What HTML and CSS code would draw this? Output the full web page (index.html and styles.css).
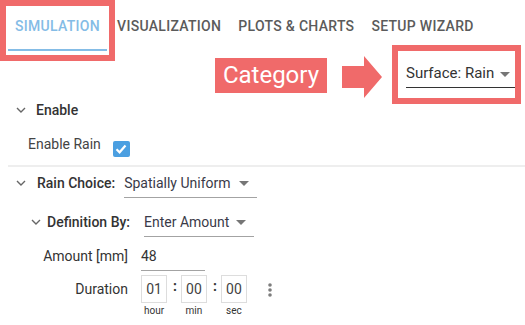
FILE: index.html
```html
<!DOCTYPE html>
<html lang="en">
<head>
<meta charset="utf-8">
<title>Simulation – Rain</title>
<link rel="stylesheet" href="styles.css">
</head>
<body>
<div class="page">
  <nav class="tabs">
    <span class="tab active">SIMULATION</span>
    <span class="tab">VISUALIZATION</span>
    <span class="tab">PLOTS &amp; CHARTS</span>
    <span class="tab">SETUP WIZARD</span>
    <span class="hl"></span>
  </nav>

  <div class="cat-row">
    <span class="cat-label">Category</span>
    <svg class="cat-arrow" viewBox="0 0 40 42" aria-hidden="true">
      <polygon points="0,10 22,10 22,0 40,21 22,42 22,32 0,32" fill="#f06a6a"/>
    </svg>
    <div class="cat-box">
      <div class="select select-dark"><span>Surface: Rain</span><i class="caret caret-dark"></i></div>
    </div>
  </div>

  <div class="group-head">
    <svg class="chev" viewBox="0 0 10 6" aria-hidden="true"><polyline points="1,1 5,5 9,1" fill="none" stroke="#666" stroke-width="1.4"/></svg>
    <span>Enable</span>
  </div>
  <div class="check-row">
    <span>Enable Rain</span>
    <span class="checkbox">
      <svg viewBox="0 0 16 16" width="16" height="16" aria-hidden="true"><polyline points="3.5,8.3 6.6,11.3 12.5,4.6" fill="none" stroke="#fff" stroke-width="2.2"/></svg>
    </span>
  </div>

  <div class="divider"></div>

  <div class="field-row lvl1">
    <svg class="chev" viewBox="0 0 10 6" aria-hidden="true"><polyline points="1,1 5,5 9,1" fill="none" stroke="#666" stroke-width="1.4"/></svg>
    <span class="field-label">Rain Choice:</span>
    <div class="select sel-wide"><span>Spatially Uniform</span><i class="caret"></i></div>
  </div>

  <div class="field-row lvl2">
    <svg class="chev" viewBox="0 0 10 6" aria-hidden="true"><polyline points="1,1 5,5 9,1" fill="none" stroke="#666" stroke-width="1.4"/></svg>
    <span class="field-label">Definition By:</span>
    <div class="select sel-narrow"><span>Enter Amount</span><i class="caret"></i></div>
  </div>

  <div class="form-row amount">
    <span class="form-label">Amount [mm]</span>
    <div class="text-input">48</div>
  </div>

  <div class="form-row duration">
    <span class="form-label tall">Duration</span>
    <div class="time">
      <div class="tcol"><span class="tbox">01</span><span class="tunit">hour</span></div>
      <span class="colon">:</span>
      <div class="tcol"><span class="tbox">00</span><span class="tunit">min</span></div>
      <span class="colon">:</span>
      <div class="tcol"><span class="tbox">00</span><span class="tunit">sec</span></div>
      <svg class="kebab" viewBox="0 0 4 14" aria-hidden="true">
        <circle cx="2" cy="2" r="1.8" fill="#7d7d7d"/>
        <circle cx="2" cy="7" r="1.8" fill="#7d7d7d"/>
        <circle cx="2" cy="12" r="1.8" fill="#7d7d7d"/>
      </svg>
    </div>
  </div>
</div>
</body>
</html>
```

FILE: styles.css
```css
html, body {
  margin: 0;
  padding: 0;
  background: #ffffff;
}

body {
  font-family: Roboto, "Noto Sans", "Liberation Sans", sans-serif;
  color: #333333;
  font-size: 14px;
}

.page {
  width: 525px;
  height: 325px;
  overflow: hidden;
}

/* ---------- tabs ---------- */
.tabs {
  position: relative;
  display: flex;
  gap: 3px;
  padding-left: 8px;
  height: 51px;
}

.tab {
  padding: 16px 7px 13px;
  line-height: 20px;
  font-size: 14px;
  font-weight: 500;
  letter-spacing: 0.3px;
  color: #5b5b5b;
  border-bottom: 2px solid transparent;
  white-space: nowrap;
}

.tab.active {
  color: #84bce6;
  border-bottom-color: #84bce6;
}

/* annotation highlight over the active tab */
.hl {
  position: absolute;
  left: 0;
  top: 0;
  width: 115px;
  height: 61px;
  box-sizing: border-box;
  border: 6px solid #f06a6a;
}

/* ---------- category annotation row ---------- */
.cat-row {
  display: flex;
  justify-content: flex-end;
  align-items: flex-start;
  margin-top: -6px;
  padding-right: 4px;
  height: 59px;
}

.cat-label {
  margin-top: 13px;
  height: 35px;
  line-height: 35px;
  padding: 0 8px;
  background: #f06a6a;
  color: #ffffff;
  font-size: 24px;
}

.cat-arrow {
  display: block;
  width: 40px;
  height: 42px;
  margin: 11px 0 0 15px;
}

.cat-box {
  margin-left: 10px;
  width: 129px;
  height: 59px;
  box-sizing: border-box;
  border: 6px solid #f06a6a;
  padding: 12px 0 0 8px;
}

/* ---------- selects ---------- */
.select {
  display: flex;
  align-items: center;
  line-height: 20px;
  padding-bottom: 4px;
  border-bottom: 1px solid #a3a3a3;
  font-size: 14px;
  color: #3a3a48;
  box-sizing: content-box;
}

.select-dark {
  font-size: 15px;
  color: #333333;
  border-bottom: 1.5px solid #333333;
}

.caret {
  width: 0;
  height: 0;
  border-left: 5px solid transparent;
  border-right: 5px solid transparent;
  border-top: 5px solid #767676;
  margin-left: auto;
  margin-right: 8px;
}

.caret-dark {
  margin-top: 3px;
  margin-right: 5px;
}

.sel-wide {
  width: 133px;
  margin-left: 9px;
}

.sel-narrow {
  width: 110px;
  margin-left: 14px;
}

/* ---------- groups ---------- */
.chev {
  display: block;
  width: 10px;
  height: 6px;
  flex: none;
}

.group-head {
  display: flex;
  align-items: center;
  height: 20px;
  margin-top: -4px;
  padding-left: 16px;
  font-weight: 500;
  color: #333333;
}

.group-head .chev {
  margin-right: 10px;
}

.check-row {
  display: flex;
  align-items: flex-start;
  margin-top: 14px;
  padding-left: 28px;
  line-height: 20px;
  color: #444444;
}

.checkbox {
  display: flex;
  align-items: center;
  justify-content: center;
  width: 17px;
  height: 16px;
  margin: 7px 0 0 12px;
  border-radius: 2px;
  background: #4b9fe1;
}

.divider {
  height: 2px;
  margin: 8px 0 0 8px;
  background: #eeeeee;
}

.field-row {
  display: flex;
  align-items: flex-start;
}

.field-row .chev {
  margin: 7px 11px 0 0;
}

.field-label {
  line-height: 20px;
  font-weight: 500;
  color: #333333;
}

.lvl1 {
  margin-top: 6px;
  padding-left: 16px;
}

.lvl2 {
  margin-top: 14px;
  padding-left: 31px;
}

.lvl2 .chev {
  margin-right: 6px;
}

/* ---------- form rows ---------- */
.form-row {
  display: flex;
  align-items: flex-start;
  color: #333333;
}

.form-label {
  width: 128px;
  text-align: right;
  line-height: 20px;
}

.form-label.tall {
  line-height: 28px;
}

.amount {
  margin-top: 9px;
}

.text-input {
  width: 64px;
  margin-left: 13px;
  line-height: 20px;
  padding-bottom: 4px;
  border-bottom: 1px solid #a3a3a3;
}

.duration {
  margin-top: 4px;
}

.time {
  display: flex;
  align-items: flex-start;
  margin-left: 13px;
}

.tcol {
  display: flex;
  flex-direction: column;
  align-items: center;
  width: 26px;
}

.tbox {
  width: 26px;
  height: 28px;
  box-sizing: border-box;
  border: 1px solid #dddddd;
  line-height: 26px;
  text-align: center;
  color: #444444;
}

.tunit {
  font-size: 10px;
  line-height: 12px;
  margin-top: 2px;
  color: #333333;
}

.colon {
  font-weight: 700;
  line-height: 22px;
  margin: 0 4px 0 6px;
  color: #333333;
}

.kebab {
  display: block;
  width: 4px;
  height: 14px;
  margin: 8px 0 0 21px;
}
```
